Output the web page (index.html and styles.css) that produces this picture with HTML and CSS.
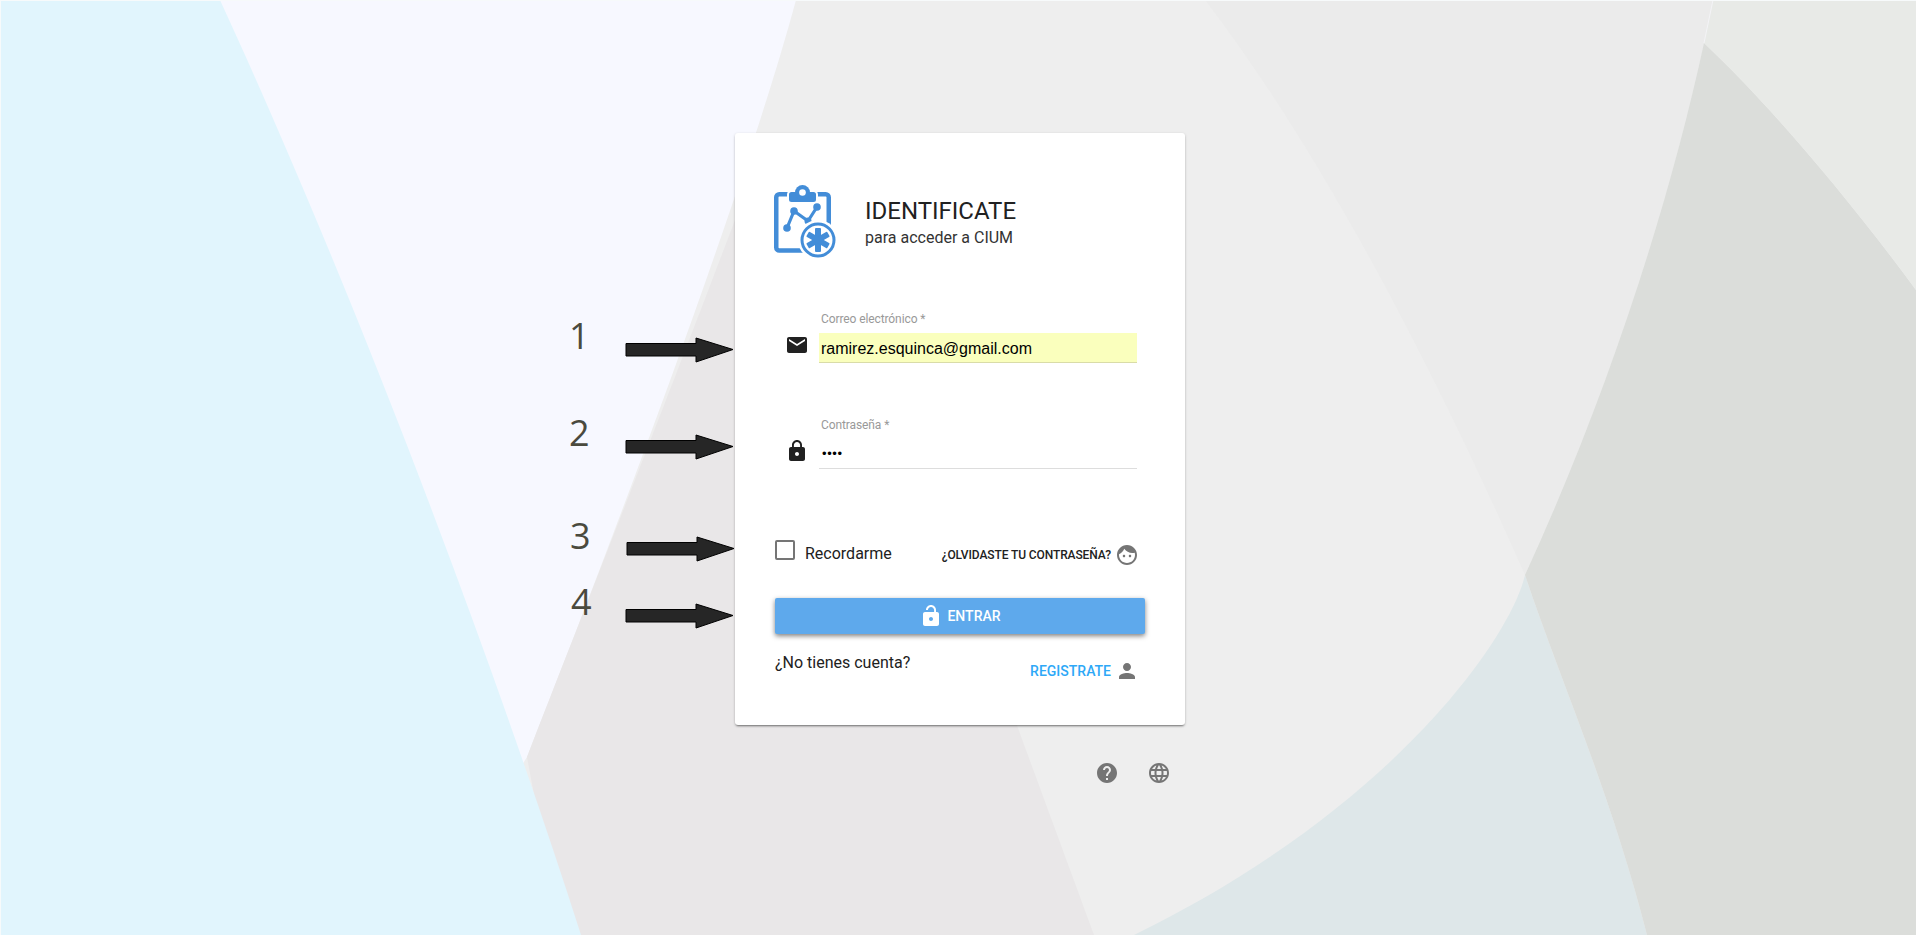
FILE: index.html
```html
<!DOCTYPE html>
<html lang="es">
<head>
<meta charset="utf-8">
<title>CIUM</title>
<link rel="stylesheet" href="styles.css">
</head>
<body>
<svg class="backdrop" viewBox="0 0 1916 935" aria-hidden="true">
  <rect class="bg-base" width="1916" height="935"/>
  <path class="bg-lav" d="M200 0H796C750 170 640 470 527 757L500 800L300 300Z"/>
  <path class="bg-rose" d="M800 134L1015 720L1094 935H560L527 757C580 620 640 470 735 220Z"/>
  <path class="bg-sky" d="M0 0H220C340 260 480 620 581 935H0Z"/>
  <path class="bg-mist" d="M1525 575C1510 640 1390 810 1134 935H1647C1610 790 1560 680 1525 575Z"/>
  <path class="bg-pale" d="M1205 0H1713L1704 43C1670 200 1610 390 1525 575C1430 360 1320 150 1205 0Z"/>
  <path class="bg-stone" d="M1704 43C1770 105 1850 200 1916 290V935H1647C1610 790 1560 680 1525 575C1610 390 1670 200 1704 43Z"/>
  <path class="bg-sage" d="M1713 0H1916V290C1850 200 1770 105 1704 43Z"/>
  <path class="bg-seam" d="M1713 0L1704 43"/>
  <path class="bg-edge" d="M0 .5H1916M.5 0V935"/>
  <g class="arrow">
    <path d="M626 343.500H696V338L733 349.500L696 362V356H626Z"/>
    <path d="M626 440.500H696V435L733 446.500L696 459V453H626Z"/>
    <path d="M627 542.500H697V537L734 548.500L697 561V555H627Z"/>
    <path d="M626 609.500H696V604L733 615.500L696 628V622H626Z"/>
  </g>
</svg>

<span class="note note-1">1</span>
<span class="note note-2">2</span>
<span class="note note-3">3</span>
<span class="note note-4">4</span>

<main class="page">
  <section class="card">
    <header class="head">
      <svg class="logo" viewBox="0 0 64 74" width="64" height="74" aria-hidden="true">
        <rect class="logo-board" x="3.250" y="10.250" width="52.500" height="56.200" rx="3"/>
        <rect class="logo-clip" x="15" y="7" width="29" height="12" rx="3.500"/>
        <circle class="logo-fill" cx="29.500" cy="8.500" r="7.500"/>
        <circle class="logo-hole" cx="29.500" cy="8.500" r="3.300"/>
        <polyline class="logo-line" points="14,44 21,27 35,37 44,23"/>
        <circle class="logo-fill" cx="14" cy="44" r="3.800"/>
        <circle class="logo-fill" cx="21" cy="27" r="3.800"/>
        <circle class="logo-fill" cx="35" cy="37" r="3.500"/>
        <circle class="logo-fill" cx="44" cy="23" r="3.800"/>
        <circle class="logo-halo" cx="45" cy="56" r="20"/>
        <circle class="logo-ring" cx="45" cy="56" r="16"/>
        <g class="logo-fill">
          <rect x="42" y="44" width="6" height="24" rx="1"/>
          <rect x="42" y="44" width="6" height="24" rx="1" transform="rotate(60 45 56)"/>
          <rect x="42" y="44" width="6" height="24" rx="1" transform="rotate(120 45 56)"/>
        </g>
      </svg>
      <div class="head-text">
        <h1 class="title">IDENTIFICATE</h1>
        <p class="subtitle">para acceder a CIUM</p>
      </div>
    </header>

    <div class="field">
      <svg class="icon icon-dark field-icon" viewBox="0 0 24 24"><path d="M20 4H4c-1.100 0-1.990.9-1.990 2L2 18c0 1.100.9 2 2 2h16c1.100 0 2-.9 2-2V6c0-1.100-.9-2-2-2zm0 4l-8 5-8-5V6l8 5 8-5v2z"/></svg>
      <div class="field-body">
        <div class="label">Correo electrónico *</div>
        <div class="input input-filled">ramirez.esquinca@gmail.com</div>
      </div>
    </div>

    <div class="field">
      <svg class="icon icon-dark field-icon" viewBox="0 0 24 24"><path d="M18 8h-1V6c0-2.760-2.240-5-5-5S7 3.240 7 6v2H6c-1.100 0-2 .9-2 2v10c0 1.100.9 2 2 2h12c1.100 0 2-.9 2-2V10c0-1.100-.9-2-2-2zm-6 9c-1.100 0-2-.9-2-2s.9-2 2-2 2 .9 2 2-.9 2-2 2zm3.100-9H8.900V6c0-1.710 1.390-3.100 3.100-3.100 1.710 0 3.100 1.390 3.100 3.100v2z"/></svg>
      <div class="field-body">
        <div class="label">Contraseña *</div>
        <div class="input input-secret">••••</div>
      </div>
    </div>

    <div class="options">
      <div class="remember">
        <span class="checkbox"></span>
        <span class="remember-text">Recordarme</span>
      </div>
      <a class="forgot">
        <span>¿OLVIDASTE TU CONTRASEÑA?</span>
        <svg class="icon icon-grey" viewBox="0 0 24 24"><path d="M9 11.750c-.69 0-1.250.56-1.250 1.250s.56 1.250 1.250 1.250 1.250-.56 1.250-1.250-.56-1.250-1.250-1.250zm6 0c-.69 0-1.250.56-1.250 1.250s.56 1.250 1.250 1.250 1.250-.56 1.250-1.250-.56-1.250-1.250-1.250zM12 2C6.480 2 2 6.480 2 12s4.480 10 10 10 10-4.480 10-10S17.520 2 12 2zm0 18c-4.410 0-8-3.590-8-8 0-.29.02-.58.05-.86 2.360-1.050 4.230-2.980 5.210-5.370C11.070 8.330 14.050 10 17.420 10c.78 0 1.530-.09 2.250-.26.21.71.33 1.470.33 2.260 0 4.410-3.590 8-8 8z"/></svg>
      </a>
    </div>

    <button class="submit" type="button">
      <svg class="icon icon-white" viewBox="0 0 24 24"><path d="M18 8h-1V6c0-2.760-2.240-5-5-5S7 3.240 7 6h1.900c0-1.710 1.390-3.100 3.100-3.100 1.710 0 3.100 1.390 3.100 3.100v2H6c-1.100 0-2 .9-2 2v10c0 1.100.9 2 2 2h12c1.100 0 2-.9 2-2V10c0-1.100-.9-2-2-2zm-6 9c-1.100 0-2-.9-2-2s.9-2 2-2 2 .9 2 2-.9 2-2 2z"/></svg>
      <span>ENTRAR</span>
    </button>

    <div class="signup">
      <span class="signup-ask">¿No tienes cuenta?</span>
      <a class="signup-link">
        <span>REGISTRATE</span>
        <svg class="icon icon-grey" viewBox="0 0 24 24"><path d="M12 12c2.210 0 4-1.790 4-4s-1.790-4-4-4-4 1.790-4 4 1.790 4 4 4zm0 2c-2.670 0-8 1.340-8 4v2h16v-2c0-2.660-5.330-4-8-4z"/></svg>
      </a>
    </div>
  </section>

  <nav class="tools">
    <svg class="icon icon-grey" viewBox="0 0 24 24"><path d="M12 2C6.480 2 2 6.480 2 12s4.480 10 10 10 10-4.480 10-10S17.520 2 12 2zm1 17h-2v-2h2v2zm2.070-7.750l-.9.920C13.450 12.900 13 13.500 13 15h-2v-.5c0-1.100.45-2.100 1.170-2.830l1.240-1.260c.37-.36.59-.86.59-1.410 0-1.100-.9-2-2-2s-2 .9-2 2H8c0-2.210 1.790-4 4-4s4 1.790 4 4c0 .88-.36 1.680-.93 2.250z"/></svg>
    <svg class="icon icon-grey" viewBox="0 0 24 24"><path d="M11.990 2C6.470 2 2 6.480 2 12s4.470 10 9.990 10C17.520 22 22 17.520 22 12S17.520 2 11.990 2zm6.930 6h-2.950c-.32-1.250-.78-2.450-1.380-3.560 1.840.63 3.370 1.910 4.330 3.560zM12 4.040c.83 1.200 1.480 2.530 1.910 3.960h-3.820c.43-1.430 1.080-2.760 1.910-3.960zM4.260 14C4.100 13.360 4 12.690 4 12s.1-1.360.26-2h3.380c-.08.66-.14 1.320-.14 2 0 .68.06 1.340.14 2H4.260zm.82 2h2.950c.32 1.250.78 2.450 1.380 3.560-1.840-.63-3.370-1.900-4.330-3.560zm2.950-8H5.080c.96-1.660 2.490-2.930 4.330-3.560C8.810 5.550 8.350 6.750 8.030 8zM12 19.960c-.83-1.200-1.480-2.530-1.910-3.960h3.820c-.43 1.430-1.080 2.760-1.910 3.960zM14.340 14H9.660c-.09-.66-.16-1.320-.16-2 0-.68.07-1.350.16-2h4.680c.09.650.16 1.320.16 2 0 .68-.07 1.340-.16 2zm.25 5.560c.6-1.110 1.060-2.310 1.380-3.560h2.950c-.96 1.650-2.490 2.930-4.330 3.560zM16.360 14c.08-.66.14-1.320.14-2 0-.68-.06-1.340-.14-2h3.380c.16.640.26 1.310.26 2s-.1 1.360-.26 2h-3.380z"/></svg>
  </nav>
</main>
</body>
</html>
```

FILE: styles.css
```css
* { box-sizing: border-box; }

html, body {
  margin: 0;
  height: 100%;
  overflow: hidden;
}

body {
  position: relative;
  font-family: Roboto, "Liberation Sans", sans-serif;
  color: #212121;
  background: #fff;
}

/* Backdrop and screenshot annotations */
.backdrop {
  position: absolute;
  inset: 0;
  width: 1916px;
  height: 935px;
  display: block;
}
.bg-base { fill: #eeeeee; }
.bg-sky { fill: #e1f5fd; }
.bg-lav { fill: #f7f8ff; }
.bg-rose { fill: #e9e7e8; }
.bg-mist { fill: #dee7e9; }
.bg-pale { fill: #ebebeb; }
.bg-stone { fill: #dbddda; }
.bg-sage { fill: #e8eae7; }
.bg-seam { fill: none; stroke: #f3f3f6; stroke-width: 1; }
.bg-edge { fill: none; stroke: #f7fafb; stroke-width: 1; }
.arrow path { fill: #262626; stroke: #000; stroke-width: 1; }

.note {
  position: absolute;
  font-family: "Open Sans", sans-serif;
  font-size: 36px;
  line-height: 40px;
  color: #4a4a3e;
}
.note-1 { left: 569px; top: 316px; }
.note-2 { left: 569px; top: 413px; }
.note-3 { left: 570px; top: 516px; }
.note-4 { left: 571px; top: 582px; }

/* Page */
.page {
  position: relative;
  width: 450px;
  margin-left: 735px;
  padding-top: 133px;
}

.card {
  background: #fff;
  border-radius: 3px;
  box-shadow: 0 2px 2px -1px rgba(0, 0, 0, .4), 0 1px 3px rgba(0, 0, 0, .2);
  padding: 51px 40px 42px;
}

.head {
  display: flex;
  gap: 28px;
  margin-left: -2px;
  height: 74px;
}
.logo { flex: none; display: block; }
.logo-board { fill: none; stroke: #438dd8; stroke-width: 4.500; }
.logo-fill { fill: #438dd8; }
.logo-clip { fill: #438dd8; stroke: #fff; stroke-width: 2; }
.logo-hole { fill: #fff; }
.logo-line { fill: none; stroke: #438dd8; stroke-width: 3.200; stroke-linejoin: round; }
.logo-halo { fill: #fff; }
.logo-ring { fill: #fff; stroke: #438dd8; stroke-width: 3; }

.head-text { margin-top: 13px; }
.title {
  margin: 0;
  font-size: 24px;
  line-height: 28px;
  font-weight: 400;
  color: #212121;
}
.subtitle {
  margin: 3px 0 0;
  font-size: 16px;
  line-height: 20px;
  color: #333;
}

/* Fields */
.field {
  display: flex;
  align-items: flex-end;
  gap: 10px;
  margin: 54px 0 0 10px;
  width: 352px;
}
.field + .field { margin-top: 55px; }
.field-icon { margin-bottom: 6px; }
.field-body { flex: 1; }
.label {
  font-size: 12px;
  line-height: 14px;
  padding-left: 2px;
  letter-spacing: -.1px;
  color: #999;
}
.input {
  margin-top: 7px;
  height: 30px;
  padding-left: 2px;
  border-bottom: 1px solid #ddd;
  font-size: 16px;
  line-height: 31px;
  color: #000;
}
.input-filled {
  font-family: "Liberation Sans", Arial, sans-serif;
  background: #faffbd;
  border-bottom-color: #d9dca8;
}
.input-secret {
  font-family: "Liberation Sans", Arial, sans-serif;
  font-size: 13px;
  line-height: 29px;
  letter-spacing: .6px;
  padding-left: 3px;
}

/* Icons */
.icon {
  flex: none;
  display: block;
  width: 24px;
  height: 24px;
}
.icon-dark { fill: #212121; }
.icon-grey { fill: #757575; }
.icon-white { fill: #fff; }

/* Options */
.options {
  display: flex;
  justify-content: space-between;
  height: 27px;
  margin-top: 71px;
  padding-right: 6px;
}
.remember { display: flex; gap: 10px; }
.checkbox {
  width: 20px;
  height: 20px;
  border: 2px solid #757575;
  border-radius: 2px;
}
.remember-text {
  font-size: 16px;
  line-height: 20px;
  margin-top: 4px;
  color: #212121;
}
.forgot {
  display: flex;
  align-items: center;
  align-self: flex-end;
  gap: 4px;
  font-size: 12px;
  font-weight: 500;
  letter-spacing: -.1px;
  color: #212121;
}

/* Button */
.submit {
  display: flex;
  align-items: center;
  justify-content: center;
  gap: 4px;
  width: 100%;
  height: 36px;
  margin-top: 31px;
  padding: 0;
  border: 0;
  border-radius: 2px;
  background: #5ea9ec;
  color: #fff;
  font: 500 14px/36px Roboto, "Liberation Sans", sans-serif;
  box-shadow: 0 2px 5px rgba(0, 0, 0, .5);
}

/* Sign up */
.signup {
  display: flex;
  justify-content: space-between;
  align-items: flex-start;
  margin-top: 19px;
  padding-right: 6px;
}
.signup-ask {
  font-size: 16px;
  line-height: 20px;
  color: #212121;
}
.signup-link {
  display: flex;
  align-items: center;
  gap: 4px;
  margin-top: 6px;
  font-size: 14px;
  font-weight: 500;
  color: #2ea8f7;
}

/* Bottom tools */
.tools {
  display: flex;
  justify-content: flex-end;
  gap: 28px;
  margin-top: 36px;
  padding-right: 14px;
}
```
